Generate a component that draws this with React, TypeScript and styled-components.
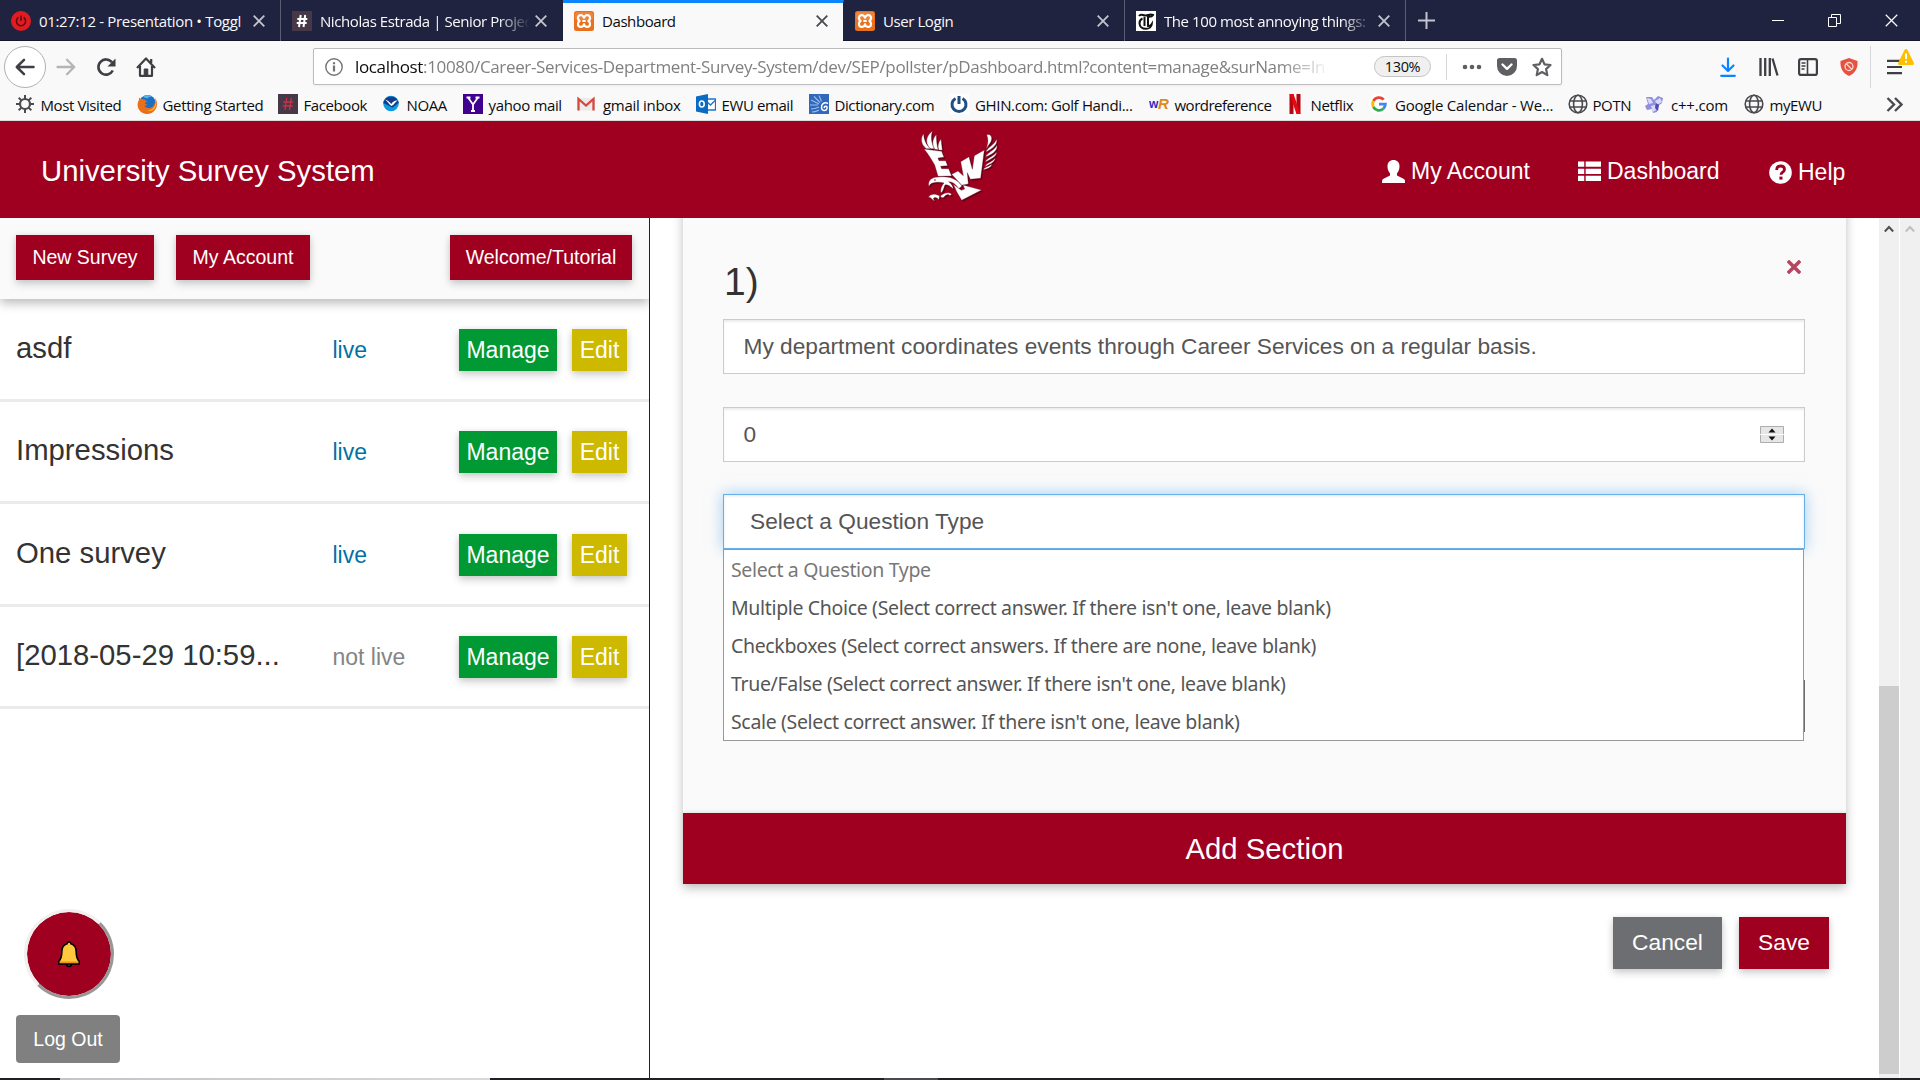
import React from "react";
import styled, { createGlobalStyle } from "styled-components";

const RED = "#a00020";
const UI_FONT = `"Open Sans", "Noto Sans", sans-serif`;
const ARIAL = `"Liberation Sans", Arial, sans-serif`;

const Global = createGlobalStyle`
  * { box-sizing: border-box; }
  html, body { margin: 0; padding: 0; }
  body { width: 1920px; height: 1080px; overflow: hidden; background: #fff; font-family: ${ARIAL}; }
  svg { display: block; flex: none; }
  button { font: inherit; border: 0; padding: 0; margin: 0; }
`;

const Screen = styled.div`
  width: 1920px;
  height: 1080px;
  display: flex;
  flex-direction: column;
  overflow: hidden;
`;

/* ---------- browser chrome ---------- */
const TabStrip = styled.div`
  height: 41px;
  flex: none;
  display: flex;
  background: #202340;
  border-bottom: 1px solid #14162c;
`;
const Tab = styled.div<{ $active?: boolean; $line?: boolean; $w: number }>`
  width: ${(p) => p.$w}px;
  height: 41px;
  flex: none;
  display: flex;
  align-items: center;
  gap: 8px;
  padding: ${(p) => (p.$active ? "0 15px 2px 11px" : "1px 15px 0 11px")};
  background: ${(p) => (p.$active ? "#f9f9fa" : "transparent")};
  border-top: ${(p) => (p.$active ? "3px solid #0a84ff" : "0")};
  border-right: 1px solid ${(p) => (p.$line ? "#5b5d73" : "transparent")};
  background-clip: padding-box;
  color: ${(p) => (p.$active ? "#0c0c0d" : "#f9f9fa")};
`;
const TabTitle = styled.span<{ $fade?: boolean; $ls?: number }>`
  flex: 1;
  overflow: hidden;
  white-space: nowrap;
  font: 15px/20px ${UI_FONT};
  letter-spacing: ${(p) => p.$ls ?? -0.42}px;
  margin-right: -3px;
  ${(p) => p.$fade && "mask-image: linear-gradient(to right, #000 85%, transparent 100%);"}
`;
const PlusSlot = styled.div`
  width: 40px;
  display: flex;
  align-items: center;
  justify-content: center;
`;
const WindowControls = styled.div`
  margin-left: auto;
  display: flex;
  align-items: center;
`;
const ControlSlot = styled.div`
  width: 57px;
  display: flex;
  justify-content: center;
`;
const NavBar = styled.div`
  height: 47px;
  flex: none;
  display: flex;
  align-items: center;
  background: #f9f9fa;
  padding: 4px 0 0 4px;
`;
const BackCircle = styled.div`
  width: 42px;
  height: 42px;
  border: 1px solid #b1b1b3;
  border-radius: 50%;
  background: #fff;
  display: flex;
  align-items: center;
  justify-content: center;
`;
const NavIcon = styled.div<{ $w: number }>`
  width: ${(p) => p.$w}px;
  flex: none;
  display: flex;
  justify-content: center;
`;
const UrlBar = styled.div`
  width: 1249px;
  height: 37px;
  flex: none;
  margin-left: 148px;
  display: flex;
  align-items: center;
  background: #fff;
  border: 1px solid #bcbcbe;
  border-radius: 2px;
  box-shadow: 0 1px 3px rgba(0, 0, 0, 0.05);
  padding-left: 11px;
`;
const UrlText = styled.div`
  width: 985px;
  flex: none;
  margin-left: 12px;
  overflow: hidden;
  white-space: nowrap;
  font: 17px/28px ${UI_FONT};
  letter-spacing: -0.35px;
  color: #808080;
  mask-image: linear-gradient(to right, #000 94%, transparent 99%);
  b { font-weight: 400; color: #0c0c0d; }
`;
const ZoomPill = styled.div`
  width: 57px;
  height: 21px;
  flex: none;
  margin-left: 34px;
  border: 1px solid #c4c4c4;
  border-radius: 11px;
  background: #f0f0f0;
  font: 14.500px/19px ${UI_FONT};
  letter-spacing: -0.4px;
  text-align: center;
  color: #0c0c0d;
`;
const Divider = styled.div<{ $h: number; $ml: number }>`
  width: 1px;
  flex: none;
  height: ${(p) => p.$h}px;
  margin-left: ${(p) => p.$ml}px;
  background: #d7d7db;
`;
const ToolIcons = styled.div`
  display: flex;
  align-items: center;
  margin-left: 147px;
`;
const MenuSlot = styled.div`
  position: relative;
  margin-left: 16px;
`;
const Warning = styled.div`
  position: absolute;
  left: 11px;
  top: -10px;
`;
const Bookmarks = styled.div`
  height: 33px;
  flex: none;
  display: flex;
  align-items: center;
  background: #f9f9fa;
  border-bottom: 1px solid #dcdcdc;
  padding-left: 15px;
`;
const Bookmark = styled.div<{ $w: number; $gap?: number; $ls?: number }>`
  width: ${(p) => p.$w}px;
  flex: none;
  display: flex;
  align-items: center;
  gap: ${(p) => p.$gap ?? 5.5}px;
  white-space: nowrap;
  font: 15px/20px ${UI_FONT};
  letter-spacing: ${(p) => p.$ls ?? -0.4}px;
  color: #0c0c0d;
  span { padding-top: 2px; }
`;

/* ---------- page ---------- */
const Header = styled.header`
  height: 97px;
  flex: none;
  display: grid;
  grid-template-columns: 920px 80px 1fr;
  align-items: center;
  background: ${RED};
  color: #fff;
`;
const LogoSlot = styled.div`
  padding-bottom: 6px;
`;
const Brand = styled.div`
  padding: 3px 0 0 41px;
  font-size: 29.3px;
  line-height: 34px;
`;
const HeaderNav = styled.nav`
  display: flex;
  align-items: center;
  padding: 3px 0 0 382px;
  font-size: 23px;
  line-height: 28px;
`;
const HeaderLink = styled.a<{ $w: number; $drop?: number }>`
  width: ${(p) => p.$w}px;
  flex: none;
  display: flex;
  align-items: center;
  gap: 6px;
  white-space: nowrap;
  padding-top: ${(p) => p.$drop ?? 0}px;
`;
const Body = styled.div`
  height: 860px;
  flex: none;
  display: flex;
`;
const Sidebar = styled.aside`
  width: 650px;
  flex: none;
  display: flex;
  flex-direction: column;
  border-right: 1px solid #222;
  background: #fff;
`;
const SideToolbar = styled.div`
  height: 81px;
  flex: none;
  display: flex;
  align-items: flex-start;
  padding: 17px 17px 0 16px;
  background: #fafafa;
  box-shadow: 0 4px 10px rgba(0, 0, 0, 0.28);
  clip-path: inset(0 0 -20px 0);
`;
const shadow = "0 4px 8px rgba(0, 0, 0, 0.18), 0 0 6px rgba(0, 0, 0, 0.08)";
const RedButton = styled.button<{ $w: number; $ml?: string }>`
  width: ${(p) => p.$w}px;
  height: 45px;
  margin-left: ${(p) => p.$ml ?? 0};
  background: ${RED};
  color: #fff;
  font-size: 19.5px;
  white-space: nowrap;
  box-shadow: ${shadow};
`;
const SurveyRow = styled.div`
  height: 102.5px;
  flex: none;
  display: flex;
  align-items: center;
  padding: 2px 0 0 16px;
  border-bottom: 3px solid #ebebeb;
`;
const SurveyName = styled.div`
  width: 316.5px;
  font-size: 29.3px;
  line-height: 34px;
  padding-bottom: 4px;
  color: #333;
`;
const SurveyState = styled.div<{ $live: boolean }>`
  width: 126.5px;
  font-size: 23px;
  line-height: 28px;
  color: ${(p) => (p.$live ? "#0071a6" : "#848484")};
`;
const RowButton = styled.button<{ $kind: "manage" | "edit" }>`
  width: ${(p) => (p.$kind === "manage" ? 98 : 55)}px;
  height: 42px;
  margin-right: 15px;
  padding-top: 1px;
  background: ${(p) => (p.$kind === "manage" ? "#009933" : "#cdb900")};
  color: #fff;
  font-size: 23px;
  box-shadow: ${shadow};
`;
const SideFoot = styled.div`
  margin-top: auto;
  padding: 0 0 15px 16px;
  display: flex;
  flex-direction: column;
  align-items: flex-start;
  gap: 16px;
`;
const BellButton = styled.button`
  width: 90px;
  height: 90px;
  margin-left: 8px;
  border-radius: 50%;
  border: 3px solid;
  border-color: #f0f0f0 #979797 #979797 #f0f0f0;
  background: ${RED};
  background-clip: padding-box;
  display: flex;
  align-items: center;
  justify-content: center;
`;
const LogOut = styled.button`
  width: 104px;
  height: 48px;
  border-radius: 4px;
  background: #808080;
  color: #fff;
  font-size: 19.5px;
`;
const Main = styled.main`
  width: 1229px;
  flex: none;
  overflow: hidden;
  padding-left: 33px;
`;
const SectionCard = styled.section`
  width: 1163px;
  height: 696px;
  margin-top: -30px;
  padding-top: 30px;
  display: flex;
  flex-direction: column;
  background: #fafafa;
  box-shadow: 0 4px 10px rgba(0, 0, 0, 0.25);
`;
const Question = styled.div`
  flex: 1;
  padding: 40px 41px 0 40px;
`;
const QuestionHead = styled.div`
  height: 61px;
  display: flex;
  justify-content: space-between;
  align-items: flex-start;
  padding: 0 4px 0 1px;
  color: #333;
  font-size: 39px;
  line-height: 48px;
  svg { margin-top: 2px; }
`;
const Field = styled.div<{ $focus?: boolean; $gap: number }>`
  height: 55px;
  margin-bottom: ${(p) => p.$gap}px;
  display: flex;
  align-items: center;
  justify-content: space-between;
  padding: 0 20px 1px ${(p) => (p.$focus ? 26 : 19.5)}px;
  background: #fff;
  border: 1px solid ${(p) => (p.$focus ? "#66afe9" : "#ccc")};
  box-shadow: ${(p) =>
    p.$focus
      ? "inset 0 1px 3px rgba(0,0,0,.1), 0 0 14px rgba(102,175,233,.6)"
      : "inset 0 2px 2px rgba(0,0,0,.075)"};
  color: #555;
  font-size: 22.7px;
  white-space: nowrap;
`;
const Under = styled.div`
  position: relative;
  height: 183px;
  padding-top: 131px;
`;
const HiddenEdge = styled.div`
  height: 52px;
  background: #6d6e71;
`;
const Dropdown = styled.ul`
  position: absolute;
  left: 0;
  top: 0;
  width: 1081px;
  height: 192px;
  margin: 0;
  padding: 0;
  list-style: none;
  background: #fff;
  border: 1px solid #999;
`;
const Option = styled.li<{ $muted?: boolean }>`
  height: 38px;
  padding-left: 7px;
  white-space: nowrap;
  font: 19.5px/40px "Noto Sans", "Open Sans", sans-serif;
  letter-spacing: -0.34px;
  color: ${(p) => (p.$muted ? "#777" : "#555")};
`;
const AddSection = styled.button`
  height: 71px;
  flex: none;
  background: ${RED};
  color: #fff;
  font-size: 29.3px;
  padding-top: 1px;
  box-shadow: 0 -1px 4px rgba(0, 0, 0, 0.1);
`;
const Actions = styled.div`
  width: 1146px;
  padding-top: 33px;
  display: flex;
  justify-content: flex-end;
  gap: 17px;
`;
const ActionButton = styled.button<{ $w: number; $bg: string }>`
  width: ${(p) => p.$w}px;
  height: 52px;
  padding-bottom: 1px;
  background: ${(p) => p.$bg};
  color: #fff;
  font-size: 22.75px;
  box-shadow: ${shadow};
`;
const ScrollTrack = styled.div<{ $w: number }>`
  width: ${(p) => p.$w}px;
  margin-right: 1px;
  flex: none;
  display: flex;
  flex-direction: column;
  justify-content: space-between;
  align-items: center;
  background: #f0f0f0;
  padding: 7px 0 4px;
`;
const Thumb = styled.div`
  width: 100%;
  height: 388px;
  background: #cdcdcd;
`;
const BottomEdge = styled.div`
  height: 2px;
  flex: none;
  background: linear-gradient(to right, #1f1f24 60px, #c4c4c6 60px, #d8d8d8 490px, #1f1f24 490px, #1f1f24 884px, #4a4a50 884px, #4a4a50 938px, #1f1f24 938px);
`;

/* ---------- icons ---------- */
const Cross = ({ s = 12, c = "#c3c4cd", w = 1.8 }: { s?: number; c?: string; w?: number }) => (
  <svg width={s} height={s} viewBox="0 0 12 12" stroke={c} strokeWidth={w} fill="none">
    <path d="M.7.7 11.3 11.3M11.3.7.7 11.3" />
  </svg>
);
const Fav = ({ children }: { children: React.ReactNode }) => (
  <svg width="20" height="20" viewBox="0 0 20 20" fill="none">{children}</svg>
);
const Xampp = () => (
  <Fav>
    <rect width="20" height="20" rx="2.5" fill="#e9701c" />
    <rect x="1" y="1" width="18" height="8" rx="2" fill="#f0934f" opacity=".6" />
    <path d="M5 4.600c1.600-1 4.200-.6 5 2.200.8-2.800 3.400-3.200 5-2.200 1.600 1.400 1.300 4.400-.6 5.400 1.900 1 2.200 4 .6 5.400-1.600 1-4.200.6-5-2.200-.8 2.800-3.400 3.200-5 2.200-1.600-1.400-1.300-4.400.6-5.400C3.700 9 3.400 6 5 4.600zM8.300 10h3.400" stroke="#fff" strokeWidth="2.200" strokeLinejoin="round" />
  </Fav>
);
const Hash = ({ c }: { c: string }) => (
  <Fav>
    <rect width="20" height="20" fill="#473847" />
    <path d="M8.700 4 7 16M13.200 4l-1.700 12M5.300 8h10M4.700 12h10" stroke={c} strokeWidth={c === "#fff" ? 2 : 1.3} />
  </Fav>
);
const Toggl = () => (
  <Fav>
    <circle cx="10" cy="10" r="10" fill="#e01b22" />
    <path d="M10 4.500v5.500M7.300 6.400a4.600 4.600 0 1 0 5.400 0" stroke="#5b0b10" strokeWidth="1.500" />
  </Fav>
);
const Telegraph = () => (
  <Fav>
    <rect width="20" height="20" fill="#fff" />
    <path d="M3 5c2-3 4 0 7-.5 2.500-.3 4-2 7-.5-1 2-3 2-5 1.800v9.200c2 .3 3-.8 3.800-2-.2 3-2.800 4.800-5.800 4.800-4 0-6.500-2.500-6.500-5.500 0-2.300 1-4 3-4.800M8.500 6v9" stroke="#111" strokeWidth="2" />
  </Fav>
);
const Globe = () => (
  <Fav>
    <g stroke="#4a4a4f" strokeWidth="1.600">
      <circle cx="10" cy="10" r="8.800" />
      <ellipse cx="10" cy="10" rx="4.400" ry="8.800" />
      <path d="M1.500 7h17M1.500 13h17" />
    </g>
  </Fav>
);
const Gear = () => (
  <Fav>
    <circle cx="10" cy="10" r="5" stroke="#4a4a4f" strokeWidth="2.200" />
    <path d="M10 1v4M10 15v4M1 10h4M15 10h4M3.700 3.700l2.700 2.700M13.600 13.600l2.700 2.700M3.700 16.300l2.700-2.700M13.600 6.400l2.700-2.700" stroke="#4a4a4f" strokeWidth="2" />
  </Fav>
);
const Firefox = () => (
  <Fav>
    <circle cx="10.500" cy="9" r="8" fill="#1d6fc4" />
    <path d="M6 3c2-2 6-2.500 9-.5-2 0-4 .8-4.500 2z" fill="#59b5ea" />
    <path d="M2 3.500c-.2 1.500.2 2 .2 2C.5 8 .2 11 1 13.500 2.500 17.700 6 20 10.200 20c5.600 0 9.800-4.500 9.800-10 0-2.500-.8-4.600-2.200-6 .9 2.700.5 5-.8 6.700-1.300 2.500-3.700 3.800-6.300 3.300-2-.4-3-1.600-3.400-2.500 1.500.6 2.500.1 3.600-.9-1.500.2-2.500-.6-3-1.600.5-.8 1.600-.7 2.300-1.500-.7-.6-1.800-.7-2.500-2C5.500 5 3.500 5.200 2 3.500z" fill="#e8701a" />
    <path d="M17.800 4c1.500 4 .8 8-2 10.500-2 1.700-4.500 2-6.500 1.500 3 1.700 6.500.5 8.300-1.500 2.200-3 2-7.500.2-10.500z" fill="#fbbd2c" />
  </Fav>
);
const Noaa = () => (
  <Fav>
    <circle cx="10" cy="9.500" r="7.800" fill="#0a9be0" />
    <path d="M2.300 9A7.800 7.800 0 0 1 17.700 9c-2 .5-3 3-6.500 4.500C8 12 5 10 2.300 9z" fill="#123c8c" />
    <path d="M4 5.500c3 .5 4.300 2.500 6.300 4.500 1.500-2.500 3.700-4 6.700-3.500-2.500 1-3.500 4-6.500 5.500C8 10.500 7 7.500 4 5.500z" fill="#fff" />
  </Fav>
);
const Yahoo = () => (
  <Fav>
    <rect width="20" height="20" fill="#400090" />
    <path d="M5 3.500 10 10.500 15 3.500M10 10v7M3.500 3.500h4M12.500 3.500h4M8 17h4" stroke="#fff" strokeWidth="1.800" />
  </Fav>
);
const Gmail = () => (
  <Fav>
    <rect x="1.500" y="4" width="17" height="12.500" fill="#eceaea" />
    <path d="M2.500 16.500V5l7.500 6.500L17.500 5v11.500" stroke="#d6483b" strokeWidth="2.300" />
  </Fav>
);
const Outlook = () => (
  <Fav>
    <path d="M9 5h10.500v11H9z" fill="#fff" stroke="#1b75c8" strokeWidth="1.300" />
    <path d="m10 7 4.500 4L19 6.500" stroke="#1b75c8" strokeWidth="1.300" />
    <path d="M0 2.500 12 0v20L0 17.500z" fill="#0a6bc2" />
    <ellipse cx="5.800" cy="10" rx="2.400" ry="3" stroke="#fff" strokeWidth="1.600" />
  </Fav>
);
const Dictionary = () => (
  <Fav>
    <rect width="20" height="20" fill="#2f68bd" />
    <path d="M2 6l8 4M5 2.500l6 6M10 1.500l2.500 6M1 11h8M2 15c4 0 6-1 8-2M3 18c4 0 5-1 7-2" stroke="#9dbde8" strokeWidth="1.100" />
    <path d="M19 9.500c-4-2-7 1-6.500 4.500.4 3 4.500 3.500 5.500.5.600-3-2.500-3-3-.5" stroke="#fff" strokeWidth="1.500" />
  </Fav>
);
const Ghin = () => (
  <Fav>
    <rect width="20" height="20" fill="#fff" />
    <path d="M10 2v8M6.500 4.500a7 7 0 1 0 7 0" stroke="#1f4f82" strokeWidth="3" />
  </Fav>
);
const WordRef = () => (
  <svg width="20" height="20" viewBox="0 0 20 20">
    <text x="0" y="14" fontFamily={ARIAL} fontWeight="700" fontSize="12" fill="#2b2bc4">w</text>
    <text x="9" y="14.500" fontFamily={ARIAL} fontWeight="700" fontStyle="italic" fontSize="15" fill="#e08a1e">R</text>
  </svg>
);
const Netflix = () => (
  <Fav>
    <path d="M4.500 0h4v20l-4 .3zM11.500 0h4v20h-4z" fill="#b2070f" />
    <path d="M4.500 0h4l7 20h-4z" fill="#e50914" />
  </Fav>
);
const Google = () => (
  <Fav>
    <circle cx="10" cy="10" r="10" fill="#fff" />
    <g strokeWidth="2.800">
      <path d="M14.700 5.600A6.400 6.400 0 0 0 4.400 7" stroke="#ea4335" />
      <path d="M4.400 7a6.400 6.400 0 0 0 0 6" stroke="#fbbc05" />
      <path d="M4.400 13a6.400 6.400 0 0 0 9.900 1.800" stroke="#34a853" />
      <path d="M14.300 14.800c1.300-1.200 2-2.800 2.100-4.600H10" stroke="#4285f4" />
    </g>
  </Fav>
);
const Cpp = () => (
  <Fav>
    <path d="M2 3h6l2 3 4-4 5 2-1 5-4 3-1 6-4 1-1-4-5 1-2-4 3-2z" fill="#8f8fdc" />
    <path d="m3 4 4 1 2 4-4 1zM11 7l5-3 2 4-5 3zM7 12l4-1 1 5-3 2z" fill="#d9d9fa" />
    <path d="m12 9 3 2-1 6-3-3z" fill="#4c4cab" />
  </Fav>
);
const Bell = () => (
  <svg width="24" height="28" viewBox="0 0 24 28">
    <circle cx="12" cy="24" r="2.500" fill="#7a4a10" stroke="#000" strokeWidth="1.500" />
    <path d="M12 2c1.300 0 1.800.8 2 1.800 3.500 1 5.200 3.700 5.200 8.200 0 5 .8 7 3 9.500V24H1.800v-2.500c2.200-2.500 3-4.500 3-9.500 0-4.500 1.700-7.200 5.200-8.200.2-1 .7-1.800 2-1.800z" fill="#ffc83d" stroke="#000" strokeWidth="1.600" />
    <path d="M2.800 21.500h18.400V23H2.800z" fill="#e8950f" />
  </svg>
);
const EagleShapes = () => (
  <>
    {/* left wing feathers */}
    <path d="M139 97c-17-12-18-34-8-45 1 18 6 30 20 45zM150 97c-16-18-12-38 7-53-5 20-3 36 7 53zM163 99c-8-16-5-34 6-44 1 18 1 30 6 45zM176 101c-4-12-1-24 7-33 2 14 3 24 4 34z" />
    {/* left wing */}
    <path d="M132 98l53 7 7 18-18 2 3 8 20 0 6 15-21 2 3 7 21 0 9 22-41 1-10-34c-8-14-20-34-32-48z" />
    {/* right wing */}
    <path d="M215 174l19-10 16 14-8-42 25-15 10 38 6-41 30-17-11 85-31 3-9-20 3 34-20 4z" />
    {/* right wing feathers */}
    <path d="M320 56c12-6 20 8 12 22l-14 20c6-16 8-28 2-42zM350 68c3 16-8 26-32 39 3-14 24-19 32-39zM351 86c2 16-10 26-34 36 2-13 26-18 34-36zM350 106c0 13-12 20-34 31 2-12 27-17 34-31zM346 125c-2 12-12 17-31 26 2-11 23-14 31-26zM336 143c-3 11-9 12-26 18 2-9 19-11 26-18z" />
    {/* head and body */}
    <path d="M147 211c-5-16 6-29 27-29 34-4 58 6 72 27l-10 8c-10-15-18-20-30-21 8 6 13 12 14 22-11-9-18-14-25-12-4 8-4 18-12 24-3-12 3-23 9-30-12-4-26-2-34 0-6 2-9 5-11 11z" />
    {/* tail */}
    <path d="M220 204l24 18 10-4-5-12 56 15-60 31-15-26z" />
    {/* talons */}
    <path d="M145 243c6-12 22-12 34-4l-3 12c-5-8-10-9-15-6-2 4 2 6 4 8-9 1-11-12-20-10zM182 238c12-9 24-12 33-4-2 3-5 5-8 2-4-3-9 0-14 5-3 4-7 4-11 0z" />
  </>
);
const Eagle = () => (
  <svg width="80" height="73" viewBox="120 41 240 219" overflow="visible">
    <g transform="translate(4 4)" fill="#4d0413" opacity=".7"><EagleShapes /></g>
    <g fill="#fff" stroke="#4d0a18" strokeWidth="1"><EagleShapes /></g>
    <circle cx="165" cy="191" r="2.500" fill={RED} />
  </svg>
);
const ScrollUp = ({ c }: { c: string }) => (
  <svg width="10" height="8" viewBox="0 0 10 8" fill="none" stroke={c} strokeWidth="2">
    <path d="M.8 6.500 5 2l4.200 4.500" />
  </svg>
);

/* ---------- data ---------- */
const bookmarks: { label: string; icon: React.ReactNode; w: number; gap?: number; ls?: number }[] = [
  { label: "Most Visited", icon: <Gear />, w: 122 },
  { label: "Getting Started", icon: <Firefox />, w: 141, ls: -0.35 },
  { label: "Facebook", icon: <Hash c="#c8324a" />, w: 103 },
  { label: "NOAA", icon: <Noaa />, w: 82 },
  { label: "yahoo mail", icon: <Yahoo />, w: 113, ls: -0.35 },
  { label: "gmail inbox", icon: <Gmail />, w: 120, gap: 7, ls: -0.3 },
  { label: "EWU email", icon: <Outlook />, w: 113 },
  { label: "Dictionary.com", icon: <Dictionary />, w: 140 },
  { label: "GHIN.com: Golf Handi...", icon: <Ghin />, w: 200, gap: 6, ls: -0.34 },
  { label: "wordreference", icon: <WordRef />, w: 136, ls: -0.5 },
  { label: "Netflix", icon: <Netflix />, w: 84 },
  { label: "Google Calendar - We...", icon: <Google />, w: 199, gap: 6, ls: -0.2 },
  { label: "POTN", icon: <Globe />, w: 76, gap: 4.5 },
  { label: "c++.com", icon: <Cpp />, w: 100, gap: 7, ls: -0.2 },
  { label: "myEWU", icon: <Globe />, w: 142 },
];
const surveys = [
  { name: "asdf", live: true },
  { name: "Impressions", live: true },
  { name: "One survey", live: true },
  { name: "[2018-05-29 10:59...", live: false },
];
const options = [
  "Select a Question Type",
  "Multiple Choice (Select correct answer. If there isn't one, leave blank)",
  "Checkboxes (Select correct answers. If there are none, leave blank)",
  "True/False (Select correct answer. If there isn't one, leave blank)",
  "Scale (Select correct answer. If there isn't one, leave blank)",
];

const Chrome = () => (
  <>
    <TabStrip>
      <Tab $w={281} $line>
        <Toggl />
        <TabTitle $ls={-0.33}>01:27:12 - Presentation • Toggl</TabTitle>
        <Cross />
      </Tab>
      <Tab $w={282}>
        <Hash c="#fff" />
        <TabTitle $fade>Nicholas Estrada | Senior Projec</TabTitle>
        <Cross />
      </Tab>
      <Tab $w={281} $active>
        <Xampp />
        <TabTitle>Dashboard</TabTitle>
        <Cross c="#4a4a4f" />
      </Tab>
      <Tab $w={281} $line>
        <Xampp />
        <TabTitle>User Login</TabTitle>
        <Cross />
      </Tab>
      <Tab $w={281} $line>
        <Telegraph />
        <TabTitle $fade>The 100 most annoying things:</TabTitle>
        <Cross />
      </Tab>
      <PlusSlot>
        <svg width="17" height="17" viewBox="0 0 17 17" stroke="#c3c4cd" strokeWidth="2">
          <path d="M8.500 0v17M0 8.500h17" />
        </svg>
      </PlusSlot>
      <WindowControls>
        <ControlSlot>
          <svg width="12" height="13" viewBox="0 0 12 13" stroke="#fff"><path d="M0 6.500h12" /></svg>
        </ControlSlot>
        <ControlSlot>
          <svg width="13" height="13" viewBox="0 0 13 13" stroke="#fff" fill="none">
            <path d="M.5 3.500h8v9h-8zM3.500 3.500v-3h9v9h-4" />
          </svg>
        </ControlSlot>
        <ControlSlot><Cross s={13} c="#fff" w={1.1} /></ControlSlot>
      </WindowControls>
    </TabStrip>
    <NavBar>
      <BackCircle>
        <svg width="20" height="18" viewBox="0 0 20 18" fill="none" stroke="#3e3e43" strokeWidth="2.500" strokeLinecap="round" strokeLinejoin="round">
          <path d="M18.500 9H2M9 1.800 1.800 9 9 16.200" />
        </svg>
      </BackCircle>
      <NavIcon $w={40}>
        <svg width="20" height="18" viewBox="0 0 20 18" fill="none" stroke="#b5b5b8" strokeWidth="2.300" strokeLinecap="round" strokeLinejoin="round">
          <path d="M1.500 9H18M11 1.800 18.200 9 11 16.200" />
        </svg>
      </NavIcon>
      <NavIcon $w={40}>
        <svg width="20" height="20" viewBox="0 0 20 20" fill="none" stroke="#3e3e43" strokeWidth="2.600">
          <path d="M16.800 13.500A7.600 7.600 0 1 1 16 5.300" />
          <path d="M19.500 1.500v8h-8z" fill="#3e3e43" stroke="none" />
        </svg>
      </NavIcon>
      <NavIcon $w={39}>
        <svg width="20" height="20" viewBox="0 0 20 20" fill="none" stroke="#3e3e43" strokeWidth="2.200" strokeLinejoin="round">
          <path d="M1 11 10 1.500 19 11M4 9v9.800h12V9M15.200 2v4" />
          <path d="M8.200 12h3.600v6H8.200z" fill="#3e3e43" strokeWidth="1" />
        </svg>
      </NavIcon>
      <UrlBar>
        <svg width="18" height="18" viewBox="0 0 18 18" fill="none" stroke="#737373" strokeWidth="1.400">
          <circle cx="9" cy="9" r="8.200" />
          <path d="M9 7.500v6M9 4.200v2" strokeWidth="2.200" />
        </svg>
        <UrlText>
          <b>localhost</b>:10080/Career-Services-Department-Survey-System/dev/SEP/pollster/pDashboard.html?content=manage&amp;surName=In
        </UrlText>
        <ZoomPill>130%</ZoomPill>
        <Divider $h={26} $ml={15} />
        <NavIcon $w={50}>
          <svg width="20" height="6" viewBox="0 0 20 6" fill="#5f5f63">
            <circle cx="3" cy="3" r="2.300" /><circle cx="10" cy="3" r="2.300" /><circle cx="17" cy="3" r="2.300" />
          </svg>
        </NavIcon>
        <NavIcon $w={20}>
          <svg width="20" height="18" viewBox="0 0 20 18">
            <path d="M2.500 0h15A2.500 2.500 0 0 1 20 2.500V8A10 10 0 0 1 0 8V2.500A2.500 2.500 0 0 1 2.500 0z" fill="#5f5f63" />
            <path d="m5.500 6.500 4.500 4.300 4.500-4.300" fill="none" stroke="#fff" strokeWidth="2.400" strokeLinecap="round" strokeLinejoin="round" />
          </svg>
        </NavIcon>
        <NavIcon $w={50}>
          <svg width="20" height="20" viewBox="0 0 20 20" fill="none" stroke="#5f5f63" strokeWidth="2.200" strokeLinejoin="round">
            <path d="m10 1.800 2.500 5.500 6 .7-4.400 4.100 1.200 6L10 15l-5.300 3.100 1.200-6L1.500 8l6-.7z" />
          </svg>
        </NavIcon>
      </UrlBar>
      <ToolIcons>
        <NavIcon $w={38}>
          <svg width="16" height="20" viewBox="0 0 16 20" fill="none" stroke="#0a84ff" strokeWidth="2.200" strokeLinecap="round" strokeLinejoin="round">
            <path d="M8 1.500v12M2.500 8.500 8 14l5.500-5.500M1.200 18.800h13.600" />
          </svg>
        </NavIcon>
        <NavIcon $w={43}>
          <svg width="20" height="18" viewBox="0 0 20 18" fill="none" stroke="#3e3e43" strokeWidth="2.300">
            <path d="M1.500 0v18M6.200 0v18M10.800 0v18M13.500.5 18.500 17.500" />
          </svg>
        </NavIcon>
        <NavIcon $w={36}>
          <svg width="20" height="18" viewBox="0 0 20 18" fill="none" stroke="#3e3e43" strokeWidth="2.200">
            <rect x="1.100" y="1.100" width="17.800" height="15.800" rx="2" />
            <path d="M9.500 1v16M3.500 5h4M3.500 8h4M3.500 11h3" strokeWidth="1.600" />
          </svg>
        </NavIcon>
        <NavIcon $w={45}>
          <svg width="18" height="18" viewBox="0 0 18 18" fill="none">
            <path d="M9 0 17.500 3c.5 7-2 12-8.500 15C2.500 15 0 10 .5 3z" fill="#e5523e" />
            <circle cx="9" cy="8.500" r="4" stroke="#f6d5cf" strokeWidth="1.300" />
            <path d="m6.300 5.800 5.400 5.400" stroke="#f6d5cf" strokeWidth="1.300" />
          </svg>
        </NavIcon>
        <Divider $h={42} $ml={-1} />
        <MenuSlot>
          <svg width="15" height="16" viewBox="0 0 15 16" stroke="#3e3e43" strokeWidth="2.200">
            <path d="M0 1.800h15M0 8h15M0 14.200h15" />
          </svg>
          <Warning>
            <svg width="16" height="16" viewBox="0 0 16 16">
              <path d="M8 0c.8 0 1.200.4 1.500 1l6.200 12.500c.6 1.300 0 2.500-1.400 2.500H1.700C.3 16-.3 14.800.3 13.500L6.500 1C6.800.4 7.200 0 8 0z" fill="#ffbf00" />
              <path d="M8 4.500v5.500M8 11.800v2" stroke="#fff" strokeWidth="2" />
            </svg>
          </Warning>
        </MenuSlot>
      </ToolIcons>
    </NavBar>
    <Bookmarks>
      {bookmarks.map((b) => (
        <Bookmark key={b.label} $w={b.w} $gap={b.gap} $ls={b.ls}>
          {b.icon}
          <span>{b.label}</span>
        </Bookmark>
      ))}
      <svg width="17" height="15" viewBox="0 0 17 15" fill="none" stroke="#4a4a4f" strokeWidth="2.400">
        <path d="m1.500 1 6.500 6.500L1.500 14M9 1l6.500 6.500L9 14" />
      </svg>
    </Bookmarks>
  </>
);

export default function App() {
  return (
    <Screen>
      <Global />
      <Chrome />
      <Header>
        <Brand>University Survey System</Brand>
        <LogoSlot><Eagle /></LogoSlot>
        <HeaderNav>
          <HeaderLink $w={196}>
            <svg width="23" height="23" viewBox="0 0 23 23" fill="#fff">
              <path d="M11.500 0c3.600 0 6 2.300 6 6.200 0 3-1 5.500-2.500 7v2.200l6.500 3.300c1 .6 1.500 1.300 1.500 2.500V23H0v-1.800c0-1.200.5-1.900 1.500-2.500L8 15.400v-2.200c-1.500-1.500-2.500-4-2.500-7C5.500 2.300 7.900 0 11.500 0z" />
            </svg>
            My Account
          </HeaderLink>
          <HeaderLink $w={191}>
            <svg width="23" height="21" viewBox="0 0 24 21" fill="#fff">
              <path d="M0 0h6.500v5.500H0zM8 0h16v5.500H8zM0 7.500h6.500V13H0zM8 7.500h16V13H8zM0 15h6.500v5.500H0zM8 15h16v5.500H8z" />
            </svg>
            Dashboard
          </HeaderLink>
          <HeaderLink $w={90} $drop={2}>
            <svg width="23" height="23" viewBox="0 0 23 23">
              <circle cx="11.500" cy="11.500" r="11.300" fill="#fff" />
              <path d="M7.700 9c0-2.800 1.700-4 3.900-4s3.900 1.300 3.900 3.500c0 2.700-3.500 2.700-3.500 5.300" fill="none" stroke={RED} strokeWidth="2.800" />
              <path d="M10.400 15.600h3.100v3h-3.100z" fill={RED} />
            </svg>
            Help
          </HeaderLink>
        </HeaderNav>
      </Header>
      <Body>
        <Sidebar>
          <SideToolbar>
            <RedButton $w={138}>New Survey</RedButton>
            <RedButton $w={134} $ml="22px">My Account</RedButton>
            <RedButton $w={182} $ml="auto">Welcome/Tutorial</RedButton>
          </SideToolbar>
          {surveys.map((s) => (
            <SurveyRow key={s.name}>
              <SurveyName>{s.name}</SurveyName>
              <SurveyState $live={s.live}>{s.live ? "live" : "not live"}</SurveyState>
              <RowButton $kind="manage">Manage</RowButton>
              <RowButton $kind="edit">Edit</RowButton>
            </SurveyRow>
          ))}
          <SideFoot>
            <BellButton><Bell /></BellButton>
            <LogOut>Log Out</LogOut>
          </SideFoot>
        </Sidebar>
        <Main>
          <SectionCard>
            <Question>
              <QuestionHead>
                <span>1)</span>
                <Cross s={14} c="#b9445d" w={3} />
              </QuestionHead>
              <Field $gap={33}>My department coordinates events through Career Services on a regular basis.</Field>
              <Field $gap={32}>
                0
                <svg width="24" height="17" viewBox="0 0 24 17">
                  <path d="M.5.5h23v16H.5z" fill="#e6e6e6" stroke="#adadad" />
                  <path d="M0 8.500h24" stroke="#fff" />
                  <path d="M12 2.500 15.500 6.500h-7zM12 14.500l3.500-4h-7z" fill="#111" />
                </svg>
              </Field>
              <Field $focus $gap={0}>Select a Question Type</Field>
              <Under>
                <HiddenEdge />
                <Dropdown>
                  {options.map((o, i) => (
                    <Option key={o} $muted={i === 0}>{o}</Option>
                  ))}
                </Dropdown>
              </Under>
            </Question>
            <AddSection>Add Section</AddSection>
          </SectionCard>
          <Actions>
            <ActionButton $w={109} $bg="#6d6e71">Cancel</ActionButton>
            <ActionButton $w={90} $bg={RED}>Save</ActionButton>
          </Actions>
        </Main>
        <ScrollTrack $w={20}>
          <ScrollUp c="#505050" />
          <Thumb />
        </ScrollTrack>
        <ScrollTrack $w={20}>
          <ScrollUp c="#bfbfbf" />
        </ScrollTrack>
      </Body>
      <BottomEdge />
    </Screen>
  );
}
